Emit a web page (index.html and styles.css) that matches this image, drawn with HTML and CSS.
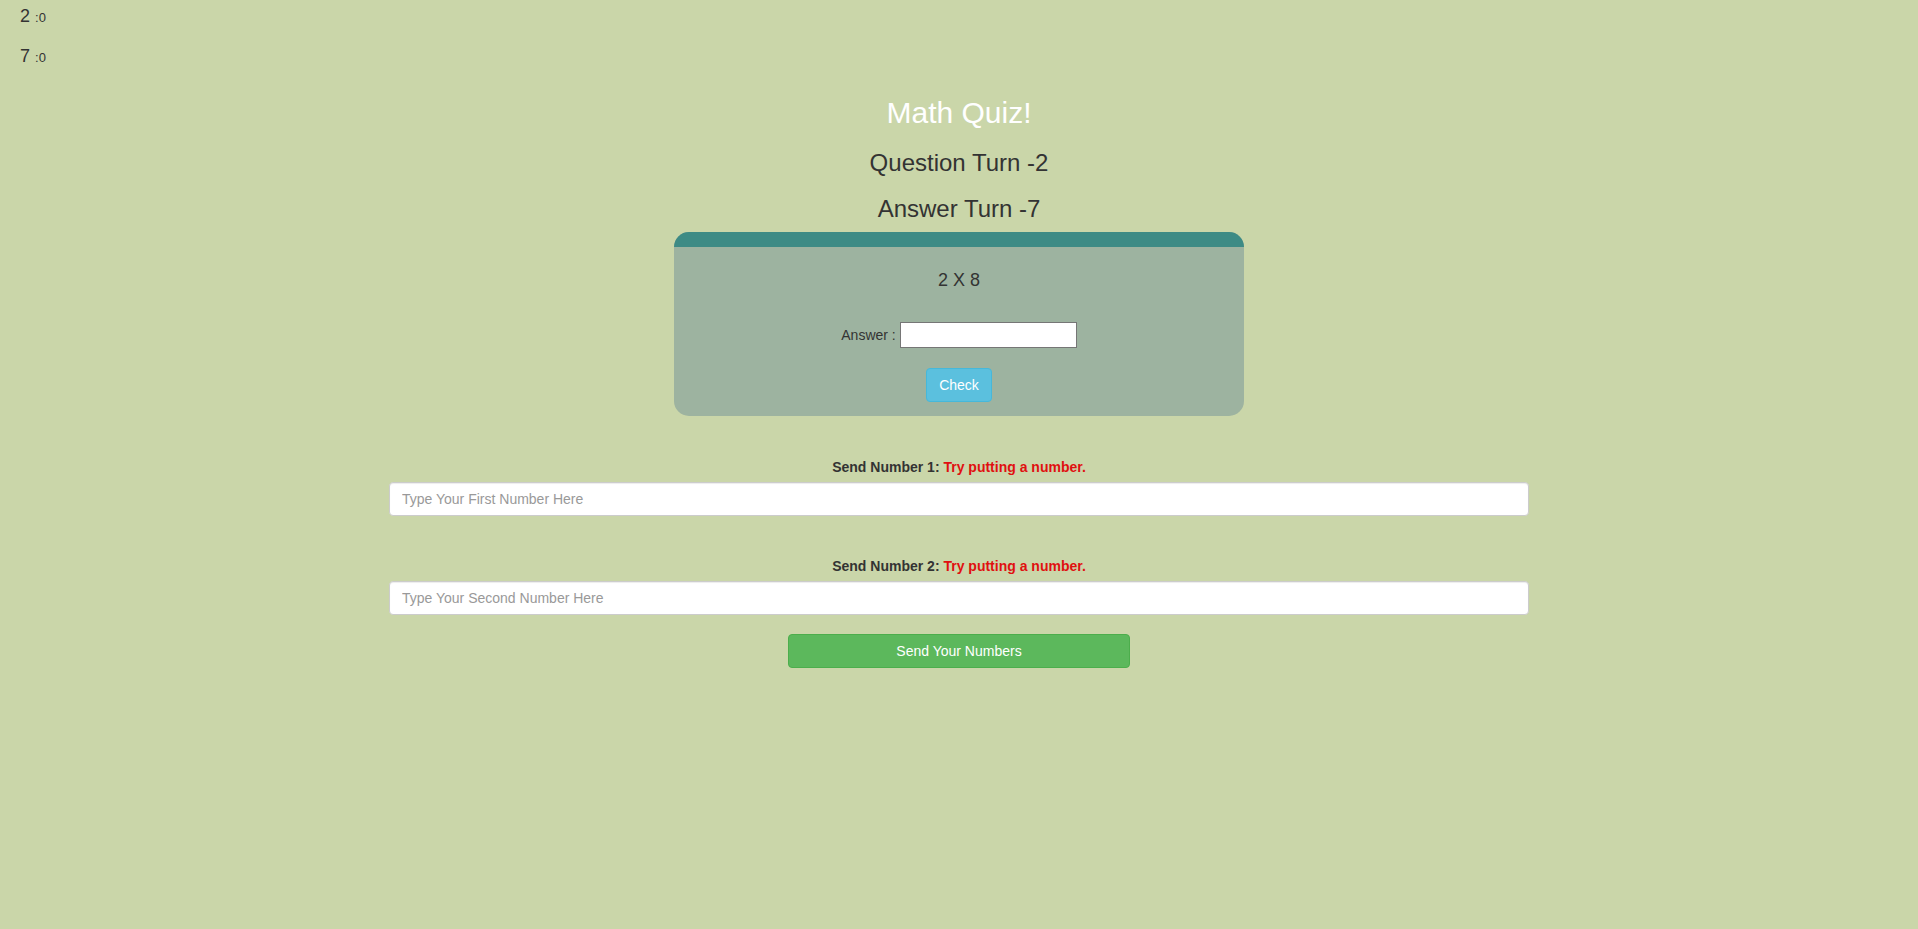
FILE: index.html
```html
<!DOCTYPE html>
<html lang="en">
<head>
<meta charset="utf-8">
<title>Math Quiz!</title>
<link rel="stylesheet" href="styles.css">
</head>
<body>
  <div class="scores">
    <div class="score"><span class="score-num">2 </span><span class="score-val">:0</span></div>
    <div class="score"><span class="score-num">7 </span><span class="score-val">:0</span></div>
  </div>

  <h1 class="title">Math Quiz!</h1>
  <h2 class="turn turn-question">Question Turn -2</h2>
  <h2 class="turn turn-answer">Answer Turn -7</h2>

  <div class="quiz-panel">
    <div class="quiz-header"></div>
    <div class="quiz-body">
      <div class="question">2 X 8</div>
      <div class="answer-row">
        <label class="answer-label" for="answer">Answer :</label>
        <input id="answer" class="answer-input" type="text">
      </div>
      <button class="btn btn-check" type="button">Check</button>
    </div>
  </div>

  <div class="container">
    <div class="form-group">
      <label class="field-label" for="num1">Send Number 1: <span class="warn">Try putting a number.</span></label>
      <input id="num1" class="form-control" type="text" placeholder="Type Your First Number Here">
    </div>
    <div class="form-group form-group-second">
      <label class="field-label" for="num2">Send Number 2: <span class="warn">Try putting a number.</span></label>
      <input id="num2" class="form-control" type="text" placeholder="Type Your Second Number Here">
    </div>
    <button class="btn btn-send" type="button">Send Your Numbers</button>
  </div>
</body>
</html>
```

FILE: styles.css
```css
* {
  box-sizing: border-box;
}

html, body {
  margin: 0;
  padding: 0;
}

body {
  background: #cad6a9;
  font-family: "Liberation Sans", Arial, sans-serif;
  font-size: 14px;
  color: #333;
  min-height: 929px;
}

.scores {
  display: flex;
  flex-direction: column;
  gap: 20px;
  padding: 6px 0 0 20px;
}

.score {
  height: 20px;
  line-height: 20px;
  font-size: 18px;
  color: #333;
  white-space: pre;
}

.score-val {
  font-size: 13px;
  line-height: 1;
}

.title {
  margin: 30px 0 0;
  font-size: 30px;
  line-height: 33px;
  font-weight: normal;
  color: #fff;
  text-align: center;
}

.turn {
  margin: 21px 0 0;
  font-size: 24px;
  line-height: 26.4px;
  font-weight: normal;
  color: #333;
  text-align: center;
}

.turn-answer {
  margin-top: 20px;
}

.quiz-panel {
  width: 570px;
  margin: 9px auto 0;
  border-radius: 15px;
  overflow: hidden;
  background: #9db3a0;
}

.quiz-header {
  height: 15px;
  background: #3d8b85;
}

.quiz-body {
  display: flex;
  flex-direction: column;
  align-items: center;
  padding: 24px 0 14px;
}

.question {
  font-size: 18px;
  line-height: 19.8px;
  color: #333;
}

.answer-row {
  display: flex;
  align-items: center;
  gap: 4px;
  margin-top: 31px;
  height: 26px;
}

.answer-label {
  font-size: 14px;
  color: #333;
}

.answer-input {
  width: 177px;
  height: 26px;
  padding: 1px 2px;
  border: 1px solid #767676;
  background: #fff;
  font: 14px "Liberation Sans", Arial, sans-serif;
  outline: none;
}

.btn {
  height: 34px;
  padding: 6px 12px;
  font: 14px/20px "Liberation Sans", Arial, sans-serif;
  color: #fff;
  border-radius: 4px;
  cursor: pointer;
}

.btn-check {
  margin-top: 20px;
  background: #5bc0de;
  border: 1px solid #46b8da;
}

.container {
  width: 1140px;
  margin: 0 auto;
  display: flex;
  flex-direction: column;
}

.form-group {
  margin-top: 41px;
  display: flex;
  flex-direction: column;
}

.form-group-second {
  margin-top: 40px;
}

.field-label {
  display: block;
  text-align: center;
  font-size: 14px;
  line-height: 20px;
  font-weight: bold;
  color: #333;
  margin-bottom: 5px;
}

.warn {
  color: #e01010;
}

.form-control {
  display: block;
  width: 100%;
  height: 34px;
  padding: 6px 12px;
  font: 14px/20px "Liberation Sans", Arial, sans-serif;
  color: #555;
  background: #fff;
  border: 1px solid #ccc;
  border-radius: 4px;
  box-shadow: inset 0 1px 1px rgba(0, 0, 0, 0.075);
  outline: none;
}

.form-control::placeholder {
  color: #999;
}

.btn-send {
  align-self: center;
  width: 342px;
  margin-top: 19px;
  background: #5cb85c;
  border: 1px solid #4cae4c;
}
```
